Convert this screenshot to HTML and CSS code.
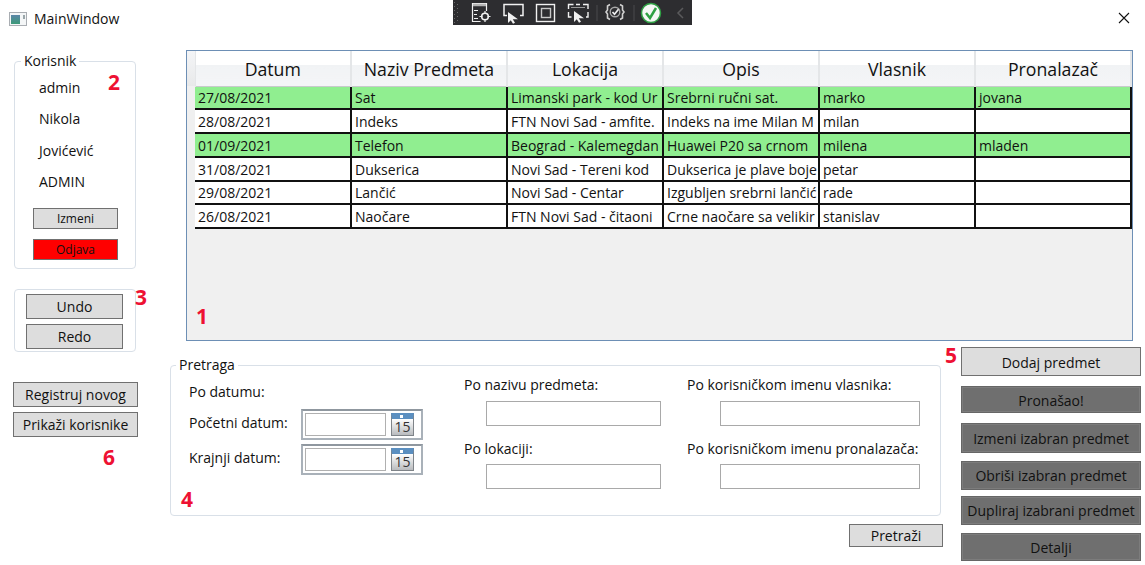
FILE: index.html
```html
<!DOCTYPE html>
<html lang="en">
<head>
    <meta charset="UTF-8">
    <meta name="viewport" content="width=device-width, initial-scale=1.0">
    <title>MainWindow</title>
    <link rel="stylesheet" href="styles.css">
</head>
<body>
    <div id="main-window">
        <header class="titlebar">
            <svg class="app-icon" width="18" height="14" viewBox="0 0 18 14">
                <defs>
                    <linearGradient id="app-fill" x1="0" y1="0" x2="0" y2="1">
                        <stop offset="0" stop-color="#5b86a8"/>
                        <stop offset="1" stop-color="#3c9a78"/>
                    </linearGradient>
                </defs>
                <rect x="0.5" y="0.5" width="17" height="13" fill="#f4f6f7" stroke="#a9adb2"/>
                <rect x="2" y="3" width="9" height="9" fill="url(#app-fill)"/>
                <rect x="14" y="3" width="2" height="4" fill="#9aa6aa"/>
            </svg>
            <span class="title">MainWindow</span>
            <div class="debug-bar">
                <svg width="239" height="25" viewBox="0 0 239 25" fill="none" stroke="#f1f1f1">
                    <g fill="#6a6a6a" stroke="none">
                        <rect x="1" y="2" width="1" height="1"/><rect x="4" y="4" width="1" height="1"/><rect x="1" y="6" width="1" height="1"/><rect x="4" y="8" width="1" height="1"/><rect x="1" y="10" width="1" height="1"/><rect x="4" y="12" width="1" height="1"/><rect x="1" y="14" width="1" height="1"/><rect x="4" y="16" width="1" height="1"/><rect x="1" y="18" width="1" height="1"/><rect x="4" y="20" width="1" height="1"/><rect x="1" y="22" width="1" height="1"/>
                    </g>
                    <!-- live tree -->
                    <path d="M33.500 11V3.500h-14v18h8" stroke-width="1.200"/>
                    <path d="M20 5h13" stroke="#b5b5b5" stroke-width="2.500"/>
                    <path d="M21 10.500h4M21 14.500h3M21 18.500h4" stroke-width="1.200"/>
                    <circle cx="32" cy="16.500" r="3.300" stroke-width="1.600"/>
                    <path d="M32 11v3M32 19v3M26.500 16.500h3M34.500 16.500h3" stroke-width="1.200"/>
                    <!-- select element -->
                    <path d="M54 15.500h-3V4.500h19v11h-3" stroke-width="1.500"/>
                    <path d="M55 12v11l2.800-2.800 2.200 3.600 2-1.100-2.200-3.500H65z" fill="#f1f1f1" stroke="none"/>
                    <!-- adorners -->
                    <rect x="83.500" y="4.500" width="18" height="17" stroke-width="1.400"/>
                    <rect x="88.500" y="8.500" width="9" height="9" stroke="#c8c8c8" stroke-width="1.400"/>
                    <!-- track focus -->
                    <path d="M115.500 9V4.500h5M130 4.500h5V9M115.500 12v5h3M135 12v5h-2M123 4.500h4" stroke-width="1.400"/>
                    <path d="M118 7.500h14" stroke="#9a9a9a"/>
                    <path d="M121 11v11l2.800-2.800 2.200 3.600 2-1.100-2.200-3.500H131z" fill="#f1f1f1" stroke="none"/>
                    <path d="M144 5v16M181 5v16" stroke="#4a4a4c"/>
                    <!-- binding failures -->
                    <path d="M157 4.500l-2.500 1.500v4l-1.500 2 1.500 2v4l2.500 1.500M167 4.500l2.500 1.500v4l1.500 2-1.500 2v4l-2.500 1.500" stroke="#d0d0d0" stroke-width="1.600"/>
                    <circle cx="162" cy="12" r="4.800" stroke="#a8a8a8" stroke-width="1.400"/>
                    <path d="M159.500 12l2 2.200 4-5" stroke-width="1.700"/>
                    <!-- no errors -->
                    <circle cx="198" cy="13" r="9.500" fill="#f5f7f5" stroke="#2ea043" stroke-width="1.500"/>
                    <path d="M193 13l4 5 6-10" stroke="#2ea043" stroke-width="2.500"/>
                    <path d="M230 8l-5 5 5 5" stroke="#5a5a5c" stroke-width="1.500"/>
                </svg>
            </div>
            <svg class="close-icon" width="12" height="12" viewBox="0 0 12 12" stroke="#111" stroke-width="1.100">
                <path d="M1 1l10 10M11 1L1 11"/>
            </svg>
        </header>

        <div class="content">
            <aside class="sidebar">
                <fieldset class="group user-group">
                    <legend>Korisnik</legend>
                    <span class="mark mark-2">2</span>
                    <p class="user-line">admin</p>
                    <p class="user-line">Nikola</p>
                    <p class="user-line">Jovićević</p>
                    <p class="user-line">ADMIN</p>
                    <button type="button" class="btn btn-small btn-edit">Izmeni</button>
                    <button type="button" class="btn btn-small btn-red">Odjava</button>
                </fieldset>

                <div class="group history-group">
                    <span class="mark mark-3">3</span>
                    <button type="button" class="btn">Undo</button>
                    <button type="button" class="btn">Redo</button>
                </div>

                <div class="admin-buttons">
                    <button type="button" class="btn">Registruj novog</button>
                    <button type="button" class="btn">Prikaži korisnike</button>
                    <span class="mark mark-6">6</span>
                </div>
            </aside>

            <main class="workspace">
                <section class="grid-panel">
                    <span class="mark mark-1">1</span>
                    <table class="items">
                        <thead>
                            <tr>
                                <th class="gutter"></th>
                                <th>Datum</th>
                                <th>Naziv Predmeta</th>
                                <th>Lokacija</th>
                                <th>Opis</th>
                                <th>Vlasnik</th>
                                <th>Pronalazač</th>
                            </tr>
                        </thead>
                        <tbody>
                            <tr class="found">
                                <td class="gutter"></td>
                                <td><div>27/08/2021</div></td>
                                <td><div>Sat</div></td>
                                <td><div>Limanski park - kod Ur</div></td>
                                <td><div>Srebrni ručni sat.</div></td>
                                <td><div>marko</div></td>
                                <td><div>jovana</div></td>
                            </tr>
                            <tr>
                                <td class="gutter"></td>
                                <td><div>28/08/2021</div></td>
                                <td><div>Indeks</div></td>
                                <td><div>FTN Novi Sad - amfite.</div></td>
                                <td><div>Indeks na ime Milan M</div></td>
                                <td><div>milan</div></td>
                                <td><div></div></td>
                            </tr>
                            <tr class="found">
                                <td class="gutter"></td>
                                <td><div>01/09/2021</div></td>
                                <td><div>Telefon</div></td>
                                <td><div>Beograd - Kalemegdan</div></td>
                                <td><div>Huawei P20 sa crnom</div></td>
                                <td><div>milena</div></td>
                                <td><div>mladen</div></td>
                            </tr>
                            <tr>
                                <td class="gutter"></td>
                                <td><div>31/08/2021</div></td>
                                <td><div>Dukserica</div></td>
                                <td><div>Novi Sad - Tereni kod</div></td>
                                <td><div>Dukserica je plave boje</div></td>
                                <td><div>petar</div></td>
                                <td><div></div></td>
                            </tr>
                            <tr>
                                <td class="gutter"></td>
                                <td><div>29/08/2021</div></td>
                                <td><div>Lančić</div></td>
                                <td><div>Novi Sad - Centar</div></td>
                                <td><div>Izgubljen srebrni lančić</div></td>
                                <td><div>rade</div></td>
                                <td><div></div></td>
                            </tr>
                            <tr>
                                <td class="gutter"></td>
                                <td><div>26/08/2021</div></td>
                                <td><div>Naočare</div></td>
                                <td><div>FTN Novi Sad - čitaoni</div></td>
                                <td><div>Crne naočare sa velikir</div></td>
                                <td><div>stanislav</div></td>
                                <td><div></div></td>
                            </tr>
                        </tbody>
                    </table>
                </section>

                <div class="lower">
                    <div class="search-col">
                        <fieldset class="group search-group">
                            <legend>Pretraga</legend>
                            <span class="mark mark-4">4</span>
                            <div class="date-col">
                                <p class="field-label">Po datumu:</p>
                                <div class="date-row">
                                    <label>Početni datum:</label>
                                    <div class="date-picker">
                                        <input type="text" aria-label="Početni datum">
                                        <span class="cal"><span>15</span></span>
                                    </div>
                                </div>
                                <div class="date-row">
                                    <label>Krajnji datum:</label>
                                    <div class="date-picker">
                                        <input type="text" aria-label="Krajnji datum">
                                        <span class="cal"><span>15</span></span>
                                    </div>
                                </div>
                            </div>
                            <div class="text-col name-col">
                                <label for="naziv">Po nazivu predmeta:</label>
                                <input type="text" id="naziv">
                                <label for="lokacija">Po lokaciji:</label>
                                <input type="text" id="lokacija">
                            </div>
                            <div class="text-col owner-col">
                                <label for="vlasnik">Po korisničkom imenu vlasnika:</label>
                                <input type="text" id="vlasnik">
                                <label for="pronalazac">Po korisničkom imenu pronalazača:</label>
                                <input type="text" id="pronalazac">
                            </div>
                        </fieldset>
                        <button type="button" class="btn search-btn">Pretraži</button>
                    </div>

                    <div class="actions">
                        <span class="mark mark-5">5</span>
                        <button type="button" class="btn add-btn">Dodaj predmet</button>
                        <button type="button" class="btn btn-off found-btn">Pronašao!</button>
                        <button type="button" class="btn btn-off edit-btn">Izmeni izabran predmet</button>
                        <button type="button" class="btn btn-off delete-btn">Obriši izabran predmet</button>
                        <button type="button" class="btn btn-off copy-btn">Dupliraj izabrani predmet</button>
                        <button type="button" class="btn btn-off details-btn">Detalji</button>
                    </div>
                </div>
            </main>
        </div>
    </div>
</body>
</html>
```
FILE: styles.css
```css
* {
    box-sizing: border-box;
}

body {
    margin: 0;
    background-color: #fff;
    font-family: 'Open Sans', 'Noto Sans', sans-serif;
    font-size: 14px;
    color: #111;
    overflow: hidden;
}

#main-window {
    width: 1145px;
    height: 565px;
    position: relative;
}

.titlebar {
    height: 37px;
    display: flex;
    align-items: center;
    padding-left: 9px;
    position: relative;
}

.title {
    margin-left: 7px;
    font-size: 14px;
}

.debug-bar {
    position: absolute;
    left: 453px;
    top: 0;
    width: 239px;
    height: 25px;
    background-color: #2d2d30;
}

.debug-bar svg {
    display: block;
}

.close-icon {
    position: absolute;
    left: 1118px;
    top: 12px;
}

.content {
    display: flex;
}

.sidebar {
    width: 170px;
    flex-shrink: 0;
    padding-left: 14px;
}

.workspace {
    flex: 1;
}

.group {
    position: relative;
    border: 1px solid #d9e0e8;
    border-radius: 4px;
    margin: 0;
}

legend {
    padding: 0 3px;
    font-size: 14px;
    line-height: 16px;
}

.mark {
    position: absolute;
    color: #ee1133;
    font-weight: 700;
    font-size: 21px;
    line-height: 24px;
}

.mark-1 { left: 9px; bottom: 12px; }
.mark-2 { left: 93px; top: 1px; }
.mark-3 { left: 120px; top: -5px; }
.mark-4 { left: 10px; top: 114px; }
.mark-5 { left: -16px; top: -4px; }
.mark-6 { left: 90px; top: 63px; }

.btn {
    display: block;
    background-color: #dddddd;
    border: 1px solid #707070;
    color: #111;
    font-family: inherit;
    font-size: 14px;
    padding: 0;
    white-space: nowrap;
}

.user-group {
    width: 122px;
    height: 216px;
    margin-top: 16px;
    padding: 3px 0 0 24px;
}

.user-group legend {
    margin-left: -18px;
}

.user-line {
    margin: 0;
    height: 31.4px;
    line-height: 31.4px;
}

.btn-small {
    width: 85px;
    height: 21px;
    margin-left: -6px;
    font-size: 12px;
}

.btn-edit {
    margin-top: 10px;
}

.btn-red {
    margin-top: 10px;
    background-color: #ff0000;
}

.history-group {
    width: 122px;
    height: 63px;
    margin-top: 20px;
    padding: 4px 0 0 11px;
}

.history-group .btn {
    width: 97px;
    height: 25px;
    margin-bottom: 5px;
}

.admin-buttons {
    position: relative;
    margin: 30px 0 0 -1px;
}

.admin-buttons .btn {
    width: 125px;
    height: 25px;
    margin-bottom: 5px;
}

.grid-panel {
    position: relative;
    width: 947px;
    height: 291px;
    margin: 13px 0 0 16px;
    background-color: #f0f0f0;
    border: 1px solid #6d8fb5;
}

.items {
    border-collapse: collapse;
    table-layout: fixed;
    width: 944px;
}

.items th {
    width: 156px;
    height: 35px;
    padding: 1px 0 0;
    font-size: 17.7px;
    font-weight: 400;
    background: linear-gradient(#fff 0%, #fff 40%, #f1f3f5 41%, #f4f5f7 100%);
    border-right: 2px solid #e4e6e8;
    border-bottom: 1px solid #c8cacc;
}

.items .gutter {
    width: 8px;
    padding: 0;
    background-color: #f0f0f0;
    border: none;
}

.items th.gutter {
    background: linear-gradient(#f4f5f7, #e8e9ea);
    border-right: 1px solid #e4e6e8;
}

.items td {
    height: 24px;
    padding: 0;
    background-color: #fff;
    border-right: 2px solid #111;
    border-bottom: 2px solid #111;
}

.items tbody tr:first-child td,
.items tbody tr:nth-child(5) td {
    height: 23px;
}

.items td div {
    padding-left: 3px;
    height: 21px;
    line-height: 21px;
    overflow: hidden;
    white-space: nowrap;
}

.items .found td {
    background-color: #90ee90;
}

.items .found td.gutter,
.items td.gutter {
    background-color: #f0f0f0;
    border: none;
}

.lower {
    display: flex;
    margin-top: 6px;
}

.search-col {
    width: 791px;
    padding-top: 10px;
}

.search-group {
    width: 771px;
    height: 159px;
    display: flex;
    padding: 0 0 0 18px;
}

.search-group legend {
    margin-left: -13px;
}

.search-group label,
.field-label {
    display: block;
    margin: 0;
}

.date-col {
    width: 275px;
}

.field-label {
    height: 20px;
    line-height: 20px;
    margin-top: 9px;
}

.date-row {
    display: flex;
    align-items: center;
    margin-top: 5px;
    height: 30px;
}

.date-row:first-of-type {
    margin-top: 7px;
}

.date-row label {
    width: 112px;
    margin-bottom: 3px;
}

.date-picker {
    width: 122px;
    height: 31px;
    display: flex;
    align-items: center;
    padding: 0 2px;
    background-color: #fff;
    border: 2px solid #a9b1b9;
    border-top-color: #8f979f;
    gap: 5px;
}

.date-picker input {
    width: 81px;
    height: 23px;
    border: 1px solid #b0b0b0;
    padding: 0;
}

.cal {
    position: relative;
    width: 23px;
    height: 23px;
    border: 1px solid #7f8489;
    border-top: 6px solid #5b8fc0;
    background: linear-gradient(#fff, #b9bbbe);
    font-size: 14px;
    line-height: 16px;
    text-align: center;
    color: #333;
}

.cal::before {
    content: "";
    position: absolute;
    left: 8px;
    top: -4px;
    width: 3px;
    height: 3px;
    background-color: #fff;
}

.text-col {
    padding-top: 2px;
}

.text-col label {
    height: 20px;
    line-height: 20px;
}

.text-col input {
    display: block;
    height: 25px;
    border: 1px solid #a9a9a9;
    margin: 6px 0 13px;
    padding: 0;
}

.text-col input:last-child {
    margin-top: 5px;
}

.name-col {
    width: 223px;
}

.name-col input {
    width: 175px;
    margin-left: 22px;
}

.owner-col input {
    width: 200px;
    margin-left: 33px;
}

.search-btn {
    width: 94px;
    height: 23px;
    margin: 8px 0 0 679px;
}

.actions {
    position: relative;
    width: 180px;
    display: flex;
    flex-direction: column;
}

.actions .btn {
    width: 180px;
    height: 29px;
}

.actions .add-btn {
    padding-top: 1px;
    margin-bottom: 10px;
}

.actions .found-btn {
    height: 27px;
    padding-top: 1px;
    margin-bottom: 10px;
}

.actions .edit-btn {
    height: 30px;
    margin-bottom: 8px;
}

.actions .delete-btn {
    margin-bottom: 6px;
}

.actions .copy-btn {
    margin-bottom: 8px;
}

.actions .details-btn {
    height: 28px;
}

.btn-off {
    background-color: #6f6f6f;
    border: 2px solid #7c7c7c;
    outline: 1px solid #666;
    outline-offset: -1px;
}
```
